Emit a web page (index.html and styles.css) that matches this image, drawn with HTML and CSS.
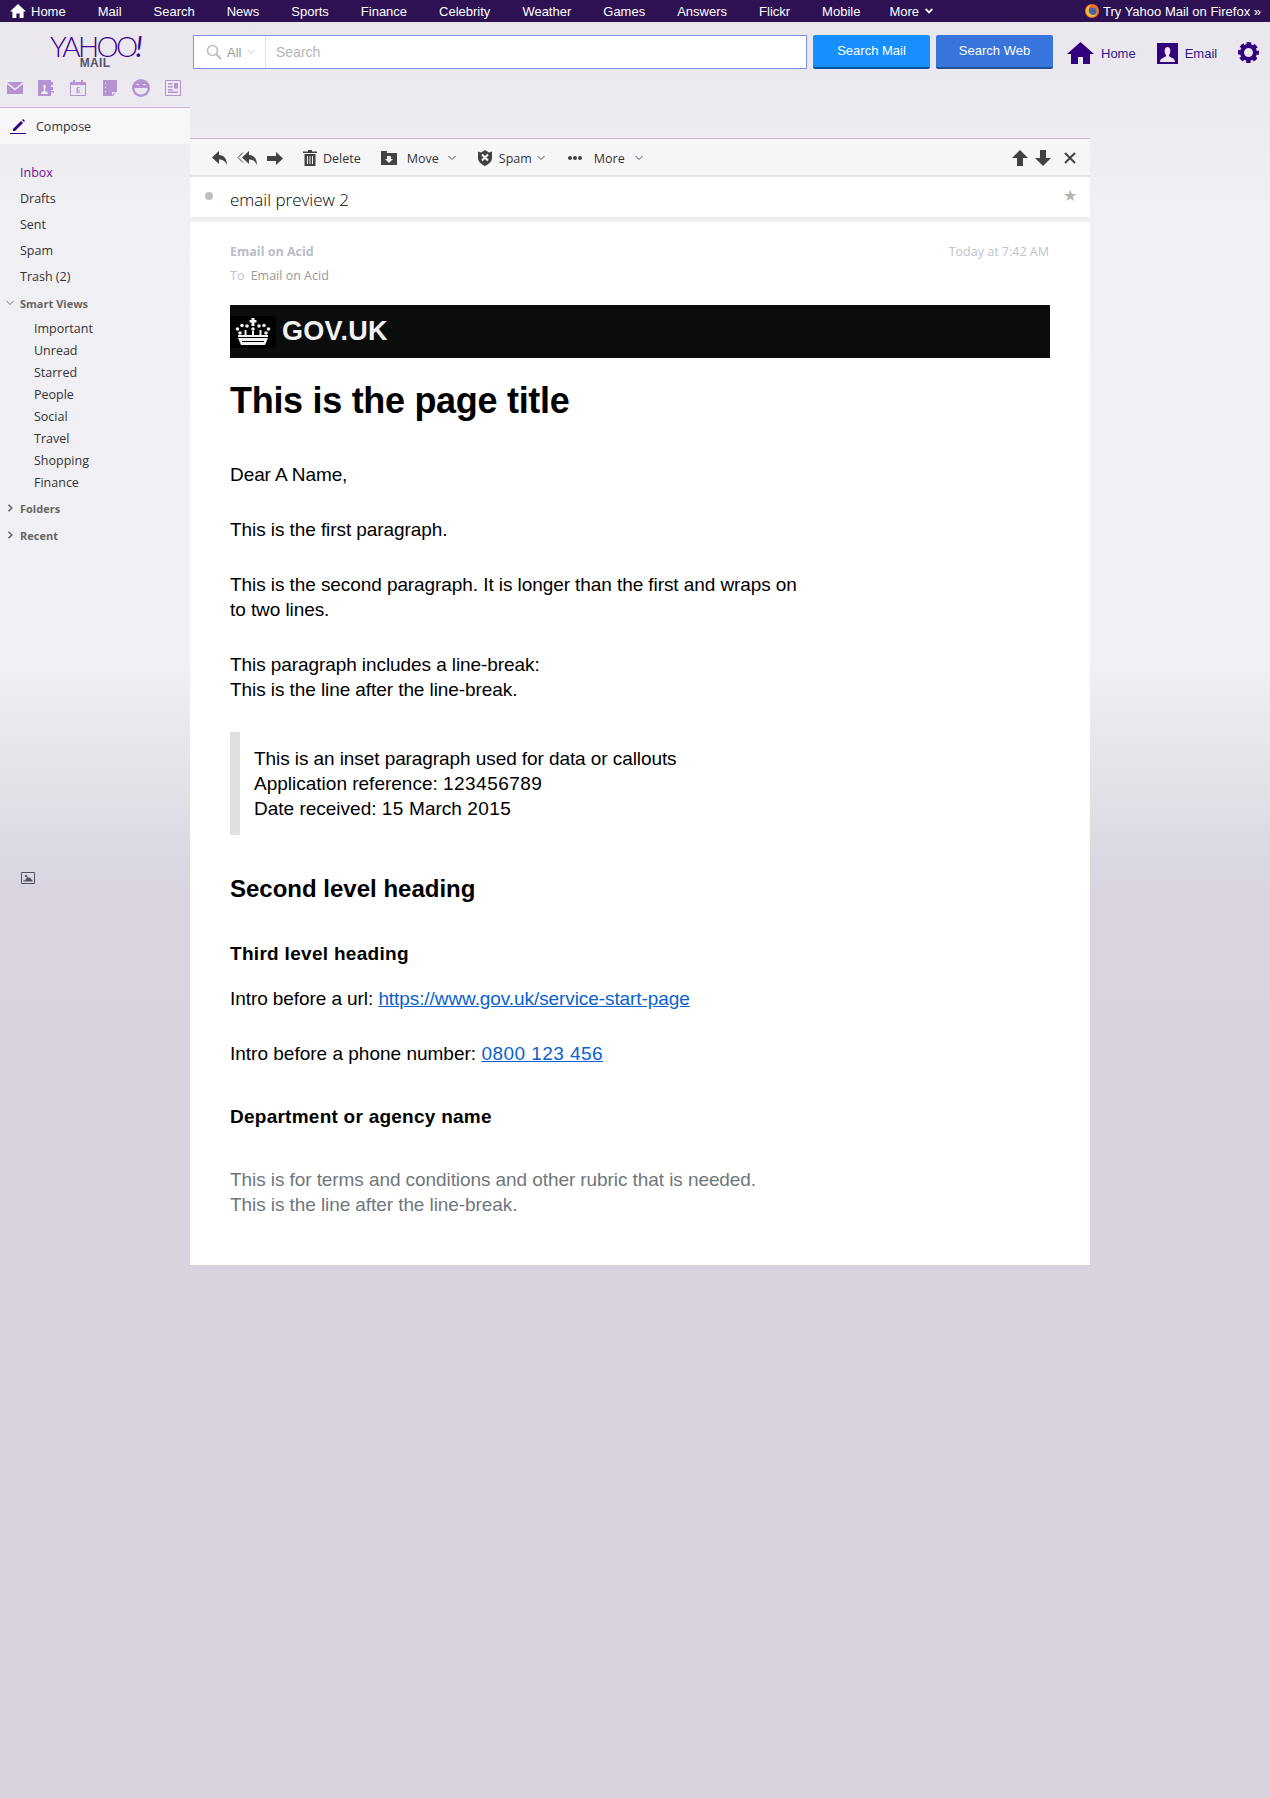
FILE: index.html
```html
<!DOCTYPE html>
<html lang="en">
<head>
  <meta charset="UTF-8">
  <meta name="viewport" content="width=device-width, initial-scale=1.0">
  <title>Yahoo Mail - email preview 2</title>
  <link rel="stylesheet" href="styles.css">
</head>
<body>
  <nav class="topnav">
    <a href="#" class="topnav-home">
      <svg class="ico-navhome" viewBox="0 0 16 14"><path fill="#fff" d="M8 0 16 7.5H13.6V14H9.6V9.4H6.4V14H2.4V7.5H0Z"/></svg>
      Home
    </a>
    <a href="#">Mail</a>
    <a href="#">Search</a>
    <a href="#">News</a>
    <a href="#">Sports</a>
    <a href="#">Finance</a>
    <a href="#">Celebrity</a>
    <a href="#">Weather</a>
    <a href="#">Games</a>
    <a href="#">Answers</a>
    <a href="#">Flickr</a>
    <a href="#">Mobile</a>
    <a href="#" class="topnav-more">More
      <svg class="ico-navchev" viewBox="0 0 8 6"><path fill="none" stroke="#fff" stroke-width="1.8" d="M.7 1 4 4.4 7.3 1"/></svg>
    </a>
    <a href="#" class="topnav-firefox">
      <svg class="ico-firefox" viewBox="0 0 14 14"><circle cx="7" cy="7" r="7" fill="#e8742a"/><circle cx="7.4" cy="7.4" r="3.8" fill="#3f68b4"/><path fill="#f6b73c" d="M1 5C2 2 4 1 6 1 4 3 3 5 4 8 5 11 9 12 12 10 10 13 6 14 3.500 12 1.500 10.500.5 7.500 1 5Z"/></svg>
      Try Yahoo Mail on Firefox &raquo;
    </a>
  </nav>

  <div class="app">
    <aside class="sidebar">
      <div class="logo">
        <div class="logo-yahoo">YAHOO<i>!</i></div>
        <div class="logo-mail">MAIL</div>
      </div>

      <div class="apps">
        <svg viewBox="0 0 16 12"><path fill="#b593d2" d="M0 0H16L8 6.500ZM0 2 8 8.500 16 2V12H0Z"/></svg>
        <svg viewBox="0 0 16 16"><path fill="#b593d2" d="M0 0H13V16H0Z"/><path fill="#ebe8f0" d="M3 14C3 11.500 5 11.500 6 10.500V9.500C5 8.500 5 4.500 6.500 4.500S8 8.500 7 9.500V10.500C8 11.500 10 11.500 10 14Z"/><path fill="#b593d2" d="M13 2H15V5H13ZM13 7H15V10H13ZM13 11H16V12.500H13Z"/></svg>
        <svg viewBox="0 0 16 16"><path fill="none" stroke="#b593d2" d="M.5 2.500H15.500V15.500H.5Z"/><path fill="#b593d2" d="M.5 2.500H15.500V5H.5ZM3 0H5V3H3ZM11 0H13V3H11ZM7 7H9.500V8H8V9.500H9.500V13H6.500V8H7ZM7.500 10.500V12H8.500V10.500Z"/></svg>
        <svg viewBox="0 0 14 16"><path fill="#b593d2" d="M0 0H14V11L10 16H0Z"/><path fill="#ebe8f0" d="M2 3H3V4H2ZM2 7H3V8H2ZM2 11H3V12H2ZM9 12H13L9 15Z"/></svg>
        <svg viewBox="0 0 18 18"><circle cx="9" cy="9" r="9" fill="#b593d2"/><path fill="#ebe8f0" d="M2.500 9H15.500C15.500 13 12.500 15.500 9 15.500S2.500 13 2.500 9Z"/><path fill="#ebe8f0" d="M4.500 5H7V6H4.500ZM11 5H13.500V6H11Z"/></svg>
        <svg viewBox="0 0 16 16"><path fill="none" stroke="#b593d2" d="M.5 .5H15.500V15.500H.5Z"/><path fill="#b593d2" d="M9 3H13V8.500H9ZM3 3H7.500V4.500H3ZM3 6H7.500V7.500H3ZM3 9H7.500V10.500H3ZM3 11.500H13V13H3Z"/></svg>
      </div>

      <a href="#" class="compose">
        <svg class="ico-compose" viewBox="0 0 16 16"><path fill="#32007f" d="M3 11 11 3 13 5 5 13H3ZM12 2 13 1 15 3 14 4ZM0 15H16V16H0Z"/></svg>
        Compose
      </a>

      <ul class="folders">
        <li class="folder folder-active">Inbox</li>
        <li class="folder">Drafts</li>
        <li class="folder">Sent</li>
        <li class="folder">Spam</li>
        <li class="folder">Trash (2)</li>
      </ul>

      <div class="group group-open">
        <svg class="ico-tree" viewBox="0 0 8 8"><path fill="none" stroke="#777" d="M.5 2 4 5.500 7.500 2"/></svg>
        Smart Views
      </div>
      <ul class="views">
        <li>Important</li>
        <li>Unread</li>
        <li>Starred</li>
        <li>People</li>
        <li>Social</li>
        <li>Travel</li>
        <li>Shopping</li>
        <li>Finance</li>
      </ul>
      <div class="group">
        <svg class="ico-tree" viewBox="0 0 8 8"><path fill="none" stroke="#666" stroke-width="1.6" d="M2.500 .8 5.800 4 2.500 7.200"/></svg>
        Folders
      </div>
      <div class="group group-recent">
        <svg class="ico-tree" viewBox="0 0 8 8"><path fill="none" stroke="#666" stroke-width="1.6" d="M2.500 .8 5.800 4 2.500 7.200"/></svg>
        Recent
      </div>

      <svg class="ico-photo" viewBox="0 0 14 12"><path fill="none" stroke="#55535f" d="M.5 .5H13.500V11.500H.5Z"/><path fill="#55535f" d="M2 9.500 3 8 4 8.500 6.500 4.500 8 6 9 5.500 12 9.500ZM4 3H6V5H4Z"/></svg>
    </aside>

    <main class="main">
      <div class="searchbar">
        <div class="searchbox">
          <div class="search-scope">
            <svg class="ico-search" viewBox="0 0 16 16"><circle cx="6.500" cy="6.500" r="5" fill="none" stroke="#bcbcc4" stroke-width="1.6"/><path stroke="#bcbcc4" stroke-width="2" d="M10 10 15 15"/></svg>
            <span>All</span>
            <svg class="ico-chev" viewBox="0 0 8 6"><path fill="none" stroke="#c9c9cf" d="M.5 1 4 4.500 7.500 1"/></svg>
          </div>
          <div class="search-input">Search</div>
        </div>
        <button class="btn btn-mail">Search Mail</button>
        <button class="btn btn-web">Search Web</button>
        <a href="#" class="userlink userlink-home">
          <svg class="ico-home" viewBox="0 0 27 22"><path fill="#32007f" d="M13.500 0 27 12H23V22H16V15H11V22H4V12H0Z"/></svg>
          Home
        </a>
        <a href="#" class="userlink userlink-email">
          <svg class="ico-user" viewBox="0 0 21 21"><path fill="#32007f" d="M0 0H21V21H0Z"/><path fill="#ebe8f0" d="M3 19C3 15 7 15 9 13V12C7 10 7 4 10.500 4S14 10 12 12V13C14 15 18 15 18 19Z"/></svg>
          Email
        </a>
        <svg class="ico-gear" viewBox="0 0 21 21">
          <circle cx="10.500" cy="10.500" r="6.500" fill="none" stroke="#32007f" stroke-width="4"/>
          <circle cx="10.500" cy="10.500" r="9" fill="none" stroke="#32007f" stroke-width="3" stroke-dasharray="4.500 2.570" stroke-dashoffset="2.200"/>
        </svg>
      </div>

      <section class="pane">
        <div class="toolbar">
          <svg class="ico-reply" viewBox="0 0 15 14"><path fill="#424242" d="M7 0V4C12 4 15 8 15 14 13 10 11 8.500 7 8.500V13L0 6.500Z"/></svg>
          <svg class="ico-replyall" viewBox="0 0 20 14"><path fill="none" stroke="#424242" d="M6 1.500 1 6.500 6 11.500"/><path fill="#424242" d="M12 0V4C17 4 20 8 20 14 18 10 16 8.500 12 8.500V13L5 6.500Z"/></svg>
          <svg class="ico-forward" viewBox="0 0 16 13"><path fill="#424242" d="M9 0 16 6.500 9 13V9H0V4H9Z"/></svg>
          <button class="tool tool-delete">
            <svg class="ico-trash" viewBox="0 0 14 16"><path fill="#424242" d="M5 0H9V1.500H14V3H0V1.500H5ZM1.500 4H12.500V16H1.500ZM4 6V14H5V6ZM6.500 6V14H7.500V6ZM9 6V14H10V6Z" fill-rule="evenodd"/></svg>
            Delete
          </button>
          <button class="tool tool-move">
            <svg class="ico-move" viewBox="0 0 16 14"><path fill="#424242" fill-rule="evenodd" d="M0 0H6V2H16V14H0ZM6 5V8H4L8 12 12 8H10V5Z"/></svg>
            <span class="tool-label">Move</span>
            <svg class="ico-chev" viewBox="0 0 8 6"><path fill="none" stroke="#555" d="M.5 1 4 4.500 7.500 1"/></svg>
          </button>
          <button class="tool tool-spam">
            <svg class="ico-shield" viewBox="0 0 14 16"><path fill="#424242" d="M0 1.500 3 2.500 7 0 11 2.500 14 1.500V8C14 12 10 14.500 7 16 4 14.500 0 12 0 8Z"/><path stroke="#f6f6f8" stroke-width="2" d="M4 4.500 10 10.500M10 4.500 4 10.500"/></svg>
            <span class="tool-label">Spam</span>
            <svg class="ico-chev" viewBox="0 0 8 6"><path fill="none" stroke="#555" d="M.5 1 4 4.500 7.500 1"/></svg>
          </button>
          <button class="tool tool-more">
            <svg class="ico-dots" viewBox="0 0 14 4"><circle cx="2" cy="2" r="2" fill="#424242"/><circle cx="7" cy="2" r="2" fill="#424242"/><circle cx="12" cy="2" r="2" fill="#424242"/></svg>
            <span class="tool-label">More</span>
            <svg class="ico-chev" viewBox="0 0 8 6"><path fill="none" stroke="#555" d="M.5 1 4 4.500 7.500 1"/></svg>
          </button>
          <div class="toolbar-right">
            <svg class="ico-updown" viewBox="0 0 16 16"><path fill="#424242" d="M8 0 16 8H11V16H5V8H0Z"/></svg>
            <svg class="ico-updown" viewBox="0 0 16 16"><path fill="#424242" d="M5 0H11V8H16L8 16 0 8H5Z"/></svg>
            <svg class="ico-close" viewBox="0 0 12 12"><path stroke="#424242" stroke-width="2" d="M1 1 11 11M11 1 1 11"/></svg>
          </div>
        </div>

        <div class="subject">
          <span class="unread-dot"></span>
          <h1 class="subject-text">email preview 2</h1>
          <span class="star">&#9733;</span>
        </div>

        <article class="message">
          <div class="msg-head">
            <div class="msg-from">Email on Acid</div>
            <div class="msg-date">Today at 7:42 AM</div>
          </div>
          <div class="msg-to"><span class="msg-to-label">To</span> Email on Acid</div>

          <div class="govbar">
            <div class="crown-cell">
              <svg class="ico-crown" viewBox="0 0 36 27">
                <g fill="#f2f2f2">
                  <path d="M16.500 0H19.500V2H21.500V4.500H19.500V8H16.500V4.500H14.500V2H16.500Z"/>
                  <circle cx="2.500" cy="11" r="1.800"/><circle cx="7" cy="7.500" r="1.800"/><circle cx="12" cy="8" r="1.800"/><circle cx="24" cy="8" r="1.800"/><circle cx="29" cy="7.500" r="1.800"/><circle cx="33.500" cy="11" r="1.800"/>
                  <circle cx="5" cy="15" r="1.800"/><circle cx="31" cy="15" r="1.800"/><circle cx="18" cy="11" r="1.800"/>
                  <path d="M9.500 12H11.500V19H9.500ZM17 13H19V19H17ZM24.500 12H26.500V19H24.500ZM3 17H33V19H3Z"/>
                  <path d="M3 20 33 20 30 27H6Z"/>
                </g>
                <path fill="#000" d="M7 23H29V24H7Z"/>
              </svg>
            </div>
            <span class="govbar-name">GOV.UK</span>
          </div>

          <h2 class="title">This is the page title</h2>

          <p class="dear">Dear A Name,</p>
          <p>This is the first paragraph.</p>
          <p>This is the second paragraph. It is longer than the first and wraps on<br>to two lines.</p>
          <p>This paragraph includes a line-break:<br>This is the line after the line-break.</p>

          <div class="inset">
            This is an inset paragraph used for data or callouts<br>
            <span class="plain">Application reference: <span class="digits">123456789</span></span><br>
            <span class="plain">Date received: <span class="digits">15</span> March <span class="digits">2015</span></span>
          </div>

          <h3 class="heading-2">Second level heading</h3>
          <h4 class="heading-3">Third level heading</h4>

          <p>Intro before a url: <a href="#">https://www.gov.uk/service-start-page</a></p>
          <p class="plain">Intro before a phone number: <a href="#" class="digits">0800 123 456</a></p>

          <h4 class="heading-dept">Department or agency name</h4>

          <p class="rubric">This is for terms and conditions and other rubric that is needed.<br>This is the line after the line-break.</p>
        </article>
      </section>
    </main>
  </div>
</body>
</html>
```

FILE: styles.css
```css
body {
  margin: 0;
  min-height: 1798px;
  font-family: "Open Sans", "Noto Sans", sans-serif;
  color: #333;
  background-color: #d8d3df;
  background-image: linear-gradient(180deg, #e8e5ec 0, #f0eff3 200px, #f1f0f4 660px, #d9d4e0 890px);
  background-repeat: no-repeat;
  background-size: 100% 1000px;
}
a {
  text-decoration: none;
}
ul {
  list-style: none;
  margin: 0;
  padding: 0;
}
button {
  font-family: inherit;
  border: none;
  background: none;
  padding: 0;
}
svg {
  display: block;
  flex: none;
}

/* top purple bar */
.topnav {
  display: flex;
  align-items: center;
  height: 22px;
  padding: 0 9px 0 10px;
  gap: 32px;
  background-color: #2d1152;
  font-family: "Liberation Sans", Arial, sans-serif;
  font-size: 13px;
}
.topnav a {
  color: #fff;
  display: flex;
  align-items: center;
}
.topnav-home {
  gap: 5px;
}
.ico-navhome {
  width: 16px;
  height: 14px;
}
.topnav-more {
  margin-left: -3px;
  gap: 6px;
}
.ico-navchev {
  width: 8px;
  height: 6px;
}
.topnav-firefox {
  margin-left: auto;
  gap: 4px;
}
.ico-firefox {
  width: 14px;
  height: 14px;
}

.app {
  display: flex;
  align-items: flex-start;
}

/* left column */
.sidebar {
  width: 190px;
  flex: none;
}
.logo {
  height: 41px;
  padding-top: 13px;
  text-align: center;
}
.logo-yahoo {
  font-family: Lato, sans-serif;
  font-weight: 300;
  font-size: 28px;
  line-height: 22px;
  letter-spacing: -2.6px;
  color: #400090;
}
.logo-yahoo i {
  font-weight: 400;
}
.logo-mail {
  font-family: "Liberation Sans", Arial, sans-serif;
  font-weight: bold;
  font-size: 12px;
  line-height: 13px;
  letter-spacing: 0.3px;
  color: #55516a;
}
.apps {
  display: flex;
  align-items: center;
  height: 17px;
  padding: 3px 0 0 7px;
  gap: 15px;
}
.apps svg:nth-child(1) {
  width: 16px;
  height: 12px;
}
.apps svg:nth-child(2) {
  width: 16px;
  height: 16px;
}
.apps svg:nth-child(3) {
  width: 16px;
  height: 16px;
  margin-left: 1px;
}
.apps svg:nth-child(4) {
  width: 14px;
  height: 16px;
  margin-left: 2px;
}
.apps svg:nth-child(5) {
  width: 18px;
  height: 18px;
}
.apps svg:nth-child(6) {
  width: 16px;
  height: 16px;
}
.compose {
  display: flex;
  align-items: center;
  gap: 10px;
  height: 36px;
  margin-top: 11px;
  padding-left: 10px;
  border-top: 1px solid #c9b3dc;
  background-color: #f7f7fa;
  color: #333;
  font-size: 12.500px;
}
.ico-compose {
  width: 16px;
  height: 16px;
}
.folders {
  margin-top: 16px;
}
.folder {
  height: 26px;
  line-height: 26px;
  padding-left: 20px;
  font-size: 12.500px;
}
.folder-active {
  color: #720e9e;
}
.group {
  display: flex;
  align-items: center;
  gap: 6px;
  height: 22px;
  padding-left: 6px;
  font-size: 11px;
  font-weight: 700;
  color: #666;
}
.group-open {
  margin-top: 2px;
}
.group-recent {
  margin-top: 5px;
}
.ico-tree {
  width: 8px;
  height: 8px;
}
.views {
  margin: 4px 0 3px;
}
.views li {
  height: 22px;
  line-height: 22px;
  padding-left: 34px;
  font-size: 12.500px;
}
.ico-photo {
  width: 14px;
  height: 12px;
  margin: 326px 0 0 21px;
}

/* search row */
.main {
  flex: none;
  width: 900px;
}
.searchbar {
  display: flex;
  align-items: flex-start;
  height: 34px;
  margin: 13px 0 69px;
  font-family: "Liberation Sans", Arial, sans-serif;
  font-size: 13px;
  width: 1072px;
}
.searchbox {
  display: flex;
  width: 612px;
  height: 32px;
  margin-left: 3px;
  border: 1px solid #7c92ec;
  background-color: #fff;
  color: #b5b5b5;
}
.search-scope {
  display: flex;
  align-items: center;
  width: 72px;
  flex: none;
  padding-left: 12px;
  box-sizing: border-box;
  border-right: 1px solid #e2e2e6;
  color: #999;
}
.search-scope span {
  margin: 0 6px 0 5px;
}
.ico-search {
  width: 16px;
  height: 16px;
}
.ico-chev {
  width: 8px;
  height: 6px;
}
.search-input {
  line-height: 32px;
  padding-left: 10px;
  font-size: 14px;
}
.btn {
  width: 117px;
  height: 34px;
  margin-left: 6px;
  padding-bottom: 1px;
  border-radius: 2px;
  color: #fff;
  font-family: "Liberation Sans", Arial, sans-serif;
  font-size: 13px;
}
.btn-mail {
  background-color: #188fff;
  border-bottom: 2px solid #0053a8;
}
.btn-web {
  background-color: #3775dd;
  border-bottom: 2px solid #1f4f96;
}
.userlink {
  display: flex;
  align-items: center;
  height: 34px;
  color: #2d1a8e;
  padding-top: 2px;
  box-sizing: border-box;
  gap: 7px;
}
.userlink-home {
  margin-left: 14px;
}
.userlink-email {
  margin-left: 21px;
}
.ico-home {
  width: 27px;
  height: 22px;
}
.ico-user {
  width: 21px;
  height: 21px;
}
.ico-gear {
  width: 21px;
  height: 21px;
  margin: 7px 0 0 21px;
}

/* message toolbar */
.toolbar {
  display: flex;
  align-items: center;
  height: 34px;
  padding: 2px 0 0 22px;
  border-top: 1px solid #c9b3dc;
  border-bottom: 2px solid #e4e4e6;
  background-color: #f6f6f8;
}
.ico-reply {
  width: 15px;
  height: 14px;
}
.ico-replyall {
  width: 20px;
  height: 14px;
  margin-left: 10px;
}
.ico-forward {
  width: 16px;
  height: 13px;
  margin-left: 10px;
}
.tool {
  display: flex;
  align-items: center;
  font-size: 12.500px;
  color: #333;
}
.tool-delete {
  margin-left: 20px;
  gap: 6px;
}
.tool-move {
  margin-left: 20px;
}
.tool-spam {
  margin-left: 22px;
}
.tool-more {
  margin-left: 23px;
}
.tool-label {
  margin: 0 9px 0 10px;
}
.tool-spam .tool-label {
  margin: 0 5px 0 7px;
}
.tool-more .tool-label {
  margin: 0 10px 0 12px;
}
.ico-trash {
  width: 14px;
  height: 16px;
}
.ico-move {
  width: 16px;
  height: 14px;
}
.ico-shield {
  width: 14px;
  height: 16px;
}
.ico-dots {
  width: 14px;
  height: 4px;
}
.toolbar-right {
  display: flex;
  align-items: center;
  margin-left: auto;
  padding-right: 14px;
  gap: 7px;
}
.ico-updown {
  width: 16px;
  height: 16px;
}
.ico-close {
  width: 12px;
  height: 12px;
  margin-left: 6px;
}

.subject {
  display: flex;
  align-items: center;
  height: 40px;
  background-color: #fff;
  border-bottom: 5px solid #eeeef3;
}
.unread-dot {
  width: 8px;
  height: 8px;
  margin: 0 17px 3px 15px;
  border-radius: 50%;
  background-color: #c0c0c0;
}
.subject-text {
  margin: 5px 0 0;
  font-size: 17px;
  font-weight: 300;
  color: #000;
}
.star {
  margin-left: auto;
  margin-right: 13px;
  padding-bottom: 4px;
  font-size: 16px;
  color: #b4b4b4;
}

/* message body */
.message {
  padding: 22px 40px 48px;
  background-color: #fff;
  font-family: "Liberation Sans", Arial, sans-serif;
  font-size: 19px;
  line-height: 25px;
  letter-spacing: -0.08px;
  color: #000;
}
.msg-head {
  display: flex;
  justify-content: space-between;
  font-family: "Open Sans", sans-serif;
  font-size: 12.500px;
  line-height: 16px;
  letter-spacing: 0;
  color: #c0c3cc;
  padding-right: 1px;
}
.msg-from {
  font-weight: 700;
  color: #b9bdc9;
}
.msg-to {
  margin-top: 8px;
  font-family: "Open Sans", sans-serif;
  font-size: 12.500px;
  line-height: 16px;
  letter-spacing: 0;
  color: #999;
}
.msg-to-label {
  color: #c0c0c8;
  margin-right: 3px;
}
.govbar {
  display: flex;
  align-items: center;
  height: 53px;
  margin-top: 21px;
  background-color: #0b0c0c;
}
.crown-cell {
  display: flex;
  align-items: center;
  justify-content: center;
  width: 46px;
  height: 32px;
  background-color: #000;
}
.ico-crown {
  width: 36px;
  height: 27px;
}
.govbar-name {
  margin-left: 6px;
  font-size: 27px;
  letter-spacing: 0.3px;
  font-weight: bold;
  color: #f2f2f2;
}
.title {
  margin: 23px 0 41px;
  font-size: 36px;
  line-height: 40px;
  letter-spacing: -0.3px;
}
.message p {
  margin: 0 0 30px;
}
.message a {
  color: #0a62cf;
  text-decoration: underline;
}
.inset {
  margin: 29px 0 39px;
  padding: 14px 0 14px 14px;
  border-left: 10px solid #dee0e2;
}
.plain {
  letter-spacing: 0;
}
.digits {
  letter-spacing: 0.45px;
}
.heading-2 {
  margin: 0 0 37px;
  font-size: 24px;
  line-height: 30px;
  letter-spacing: 0;
}
.heading-3 {
  margin: 0 0 20px;
  font-size: 19px;
  line-height: 25px;
  letter-spacing: 0.3px;
}
.heading-dept {
  margin: 38px 0 38px;
  font-size: 19px;
  line-height: 25px;
  letter-spacing: 0.25px;
}
.message .rubric {
  margin: 0;
  color: #6f777b;
}
```
